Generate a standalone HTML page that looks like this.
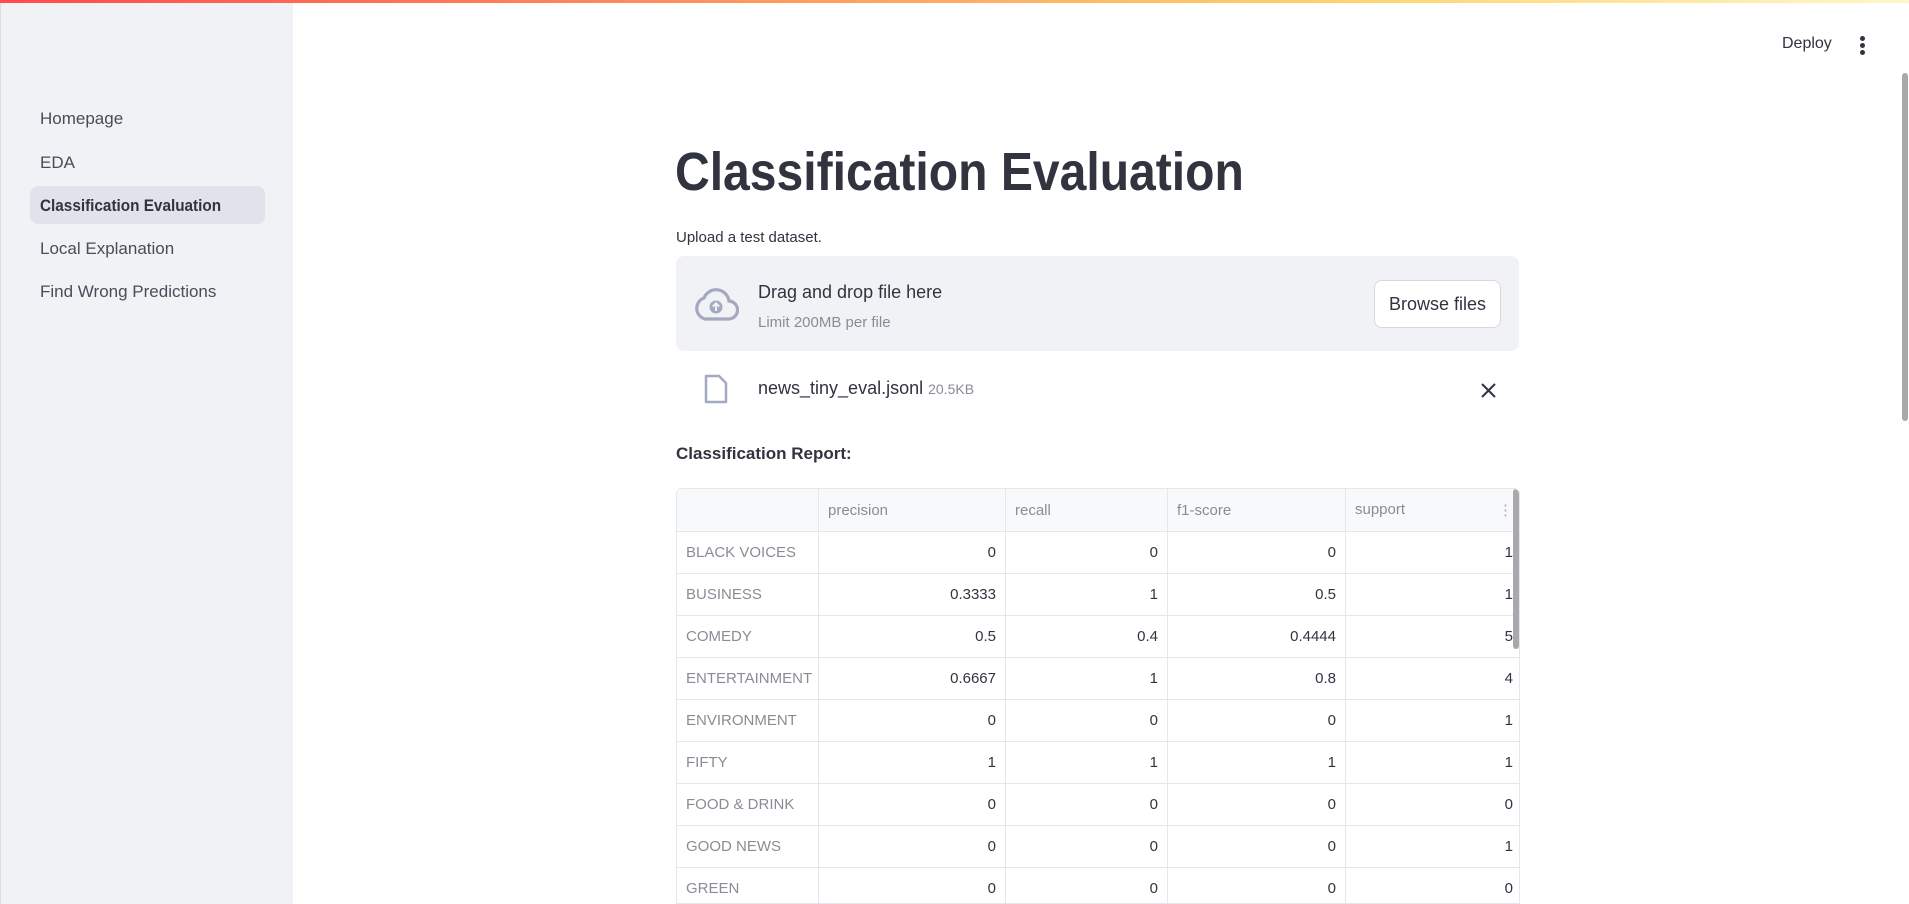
<!DOCTYPE html>
<html><head><meta charset="utf-8"><style>
*{margin:0;padding:0;box-sizing:border-box}
body{width:1909px;height:904px;overflow:hidden;background:#fff;font-family:"Liberation Sans",sans-serif;color:#31333f;position:relative}
.a{position:absolute;white-space:nowrap}
.top{left:0;top:0;width:1909px;height:3px;background:linear-gradient(90deg,#ff4b4b,#fdd36e 70%,#fff7c8)}
.side{left:0;top:3px;width:293px;height:901px;background:#f0f2f6;border-left:1px solid #ddd}
.nav{left:40px;font-size:17px;color:#4a4c57}
.act{left:30px;top:186px;width:235px;height:38px;background:#e0e3ea;border-radius:8px}
.sq{display:inline-block;transform-origin:left center}
table{border-collapse:collapse;font-size:15px;table-layout:fixed}
td{border:1px solid #e6e7eb;height:42px;padding:0 9px;text-align:right;color:#31333f;overflow:hidden}
td.h{text-align:left;color:#8a8c95}
tr.hd td{background:#f8f9fb;color:#8a8c95;text-align:left;height:43px}
</style></head><body>
<div class="a top"></div>
<div class="a side"></div>
<div class="a act"></div>
<div class="a nav" style="top:109px">Homepage</div>
<div class="a nav" style="top:153px">EDA</div>
<div class="a nav" style="top:196px;color:#31333f;font-weight:bold"><span class="sq" style="transform:scaleX(.9)">Classification Evaluation</span></div>
<div class="a nav" style="top:239px">Local Explanation</div>
<div class="a nav" style="top:282px">Find Wrong Predictions</div>

<div class="a" style="left:1782px;top:35px;font-size:16px;color:#31333f">Deploy</div>
<div class="a" style="left:1860px;top:36px;width:5px">
<div style="width:5px;height:5px;border-radius:50%;background:#31333f;margin-bottom:2px"></div>
<div style="width:5px;height:5px;border-radius:50%;background:#31333f;margin-bottom:2px"></div>
<div style="width:5px;height:5px;border-radius:50%;background:#31333f"></div></div>
<div class="a" style="left:1902px;top:73px;width:6px;height:348px;background:#a9a9ad;border-radius:3px"></div>

<div class="a" style="left:675px;top:141px;font-size:54px;font-weight:bold;color:#31333f"><span class="sq" style="transform:scaleX(.89)">Classification Evaluation</span></div>
<div class="a" style="left:676px;top:229px;font-size:15px">Upload a test dataset.</div>

<div class="a" style="left:676px;top:256px;width:843px;height:95px;background:#f0f2f6;border-radius:8px"></div>
<svg class="a" style="left:693px;top:288px" width="46" height="34" viewBox="0 0 46 34"><path d="M12 31 H35 A9 9 0 0 0 36 13 A13 13 0 0 0 11 10 A11 11 0 0 0 12 31 Z" fill="none" stroke="#a3aac0" stroke-width="3.2"/><circle cx="23" cy="19" r="6.5" fill="#a3aac0"/><path d="M23 23 V15.5 M19.8 18.5 L23 15.3 L26.2 18.5" stroke="#f0f2f6" stroke-width="2" fill="none"/></svg>
<div class="a" style="left:758px;top:282px;font-size:18px;color:#31333f">Drag and drop file here</div>
<div class="a" style="left:758px;top:314px;font-size:15px;color:#8a8c95">Limit 200MB per file</div>
<div class="a" style="left:1374px;top:280px;width:127px;height:48px;background:#fff;border:1px solid #d6d8de;border-radius:8px;font-size:18px;text-align:center;line-height:46px">Browse files</div>

<svg class="a" style="left:704px;top:374px" width="24" height="30" viewBox="0 0 24 30"><path d="M2 2 H15 L22 9 V28 H2 Z" fill="none" stroke="#a3aac0" stroke-width="2.5" stroke-linejoin="round"/></svg>
<div class="a" style="left:758px;top:378px;font-size:18px">news_tiny_eval.jsonl <span style="font-size:14px;color:#8a8c95">20.5KB</span></div>
<svg class="a" style="left:1481px;top:383px" width="15" height="15" viewBox="0 0 15 15"><path d="M1 1 L14 14 M14 1 L1 14" stroke="#31333f" stroke-width="2"/></svg>

<div class="a" style="left:676px;top:444px;font-size:17px;font-weight:bold">Classification Report:</div>

<div class="a" style="left:676px;top:488px;width:844px;height:416px;overflow:hidden;border:1px solid #e6e7eb;border-radius:6px 6px 0 0">
<table style="width:846px;margin:-1px">
<colgroup><col style="width:142px"><col style="width:187px"><col style="width:162px"><col style="width:178px"><col style="width:177px"></colgroup>
<tr class="hd"><td></td><td>precision</td><td>recall</td><td>f1-score</td><td>support <span style="float:right;color:#aaa">⋮</span></td></tr>
<tr><td class="h">BLACK VOICES</td><td>0</td><td>0</td><td>0</td><td>1</td></tr>
<tr><td class="h">BUSINESS</td><td>0.3333</td><td>1</td><td>0.5</td><td>1</td></tr>
<tr><td class="h">COMEDY</td><td>0.5</td><td>0.4</td><td>0.4444</td><td>5</td></tr>
<tr><td class="h">ENTERTAINMENT</td><td>0.6667</td><td>1</td><td>0.8</td><td>4</td></tr>
<tr><td class="h">ENVIRONMENT</td><td>0</td><td>0</td><td>0</td><td>1</td></tr>
<tr><td class="h">FIFTY</td><td>1</td><td>1</td><td>1</td><td>1</td></tr>
<tr><td class="h">FOOD &amp; DRINK</td><td>0</td><td>0</td><td>0</td><td>0</td></tr>
<tr><td class="h">GOOD NEWS</td><td>0</td><td>0</td><td>0</td><td>1</td></tr>
<tr><td class="h">GREEN</td><td>0</td><td>0</td><td>0</td><td>0</td></tr>
</table>
<div class="a" style="left:836px;top:0;width:6px;height:160px;background:#a9a9ad;border-radius:3px"></div>
</div>
</body></html>
